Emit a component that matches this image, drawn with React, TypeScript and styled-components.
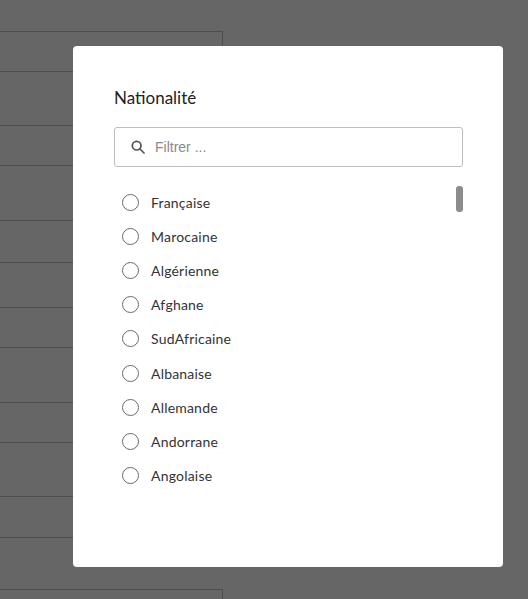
import React from "react";
import styled, { createGlobalStyle } from "styled-components";

const Global = createGlobalStyle`
  html, body { margin: 0; padding: 0; background: #666; font-family: Lato, "Noto Sans", sans-serif; }
  #root { width: 528px; height: 599px; overflow: hidden; position: relative; }
`;

const BgPage = styled.div`
  padding-top: 31px;
  width: 223px;
`;
const BgRow = styled.div<{ h: number }>`
  height: ${(p) => p.h}px;
  box-sizing: border-box;
  border-top: 1px solid #4e4e4e;
  border-right: ${(p) => (p.h === 40 ? "1px solid #4e4e4e" : "none")};
`;

const Modal = styled.div`
  position: absolute;
  left: 73px;
  top: 46px;
  width: 430px;
  height: 521px;
  background: #fff;
  border-radius: 4px;
  box-sizing: border-box;
  padding: 41px 41px 0 41px;
  display: flex;
  flex-direction: column;
`;
const Title = styled.h2`
  margin: 0;
  font-size: 17px;
  font-weight: 400;
  color: #222;
  line-height: 22px;
`;
const SearchBox = styled.div`
  margin-top: 18px;
  height: 40px;
  border: 1px solid #bdbdbd;
  border-radius: 3px;
  box-sizing: border-box;
  display: flex;
  align-items: center;
  padding-left: 15px;
  gap: 9px;
  width: 349px;
`;
const Placeholder = styled.span`
  font-size: 14px;
  color: #8a8a8a;
  font-family: "Liberation Sans", Arial, sans-serif;
`;
const ListWrap = styled.div`
  position: relative;
  margin-top: 18px;
  width: 349px;
`;
const Item = styled.div`
  height: 34.2px;
  display: flex;
  align-items: center;
  padding-left: 8px;
  gap: 12px;
`;
const Radio = styled.span`
  width: 17px;
  height: 17px;
  border: 1.6px solid #6a6a6a;
  border-radius: 50%;
  box-sizing: border-box;
`;
const Label = styled.span`
  font-size: 14px;
  color: #333;
  letter-spacing: 0.2px;
`;
const Thumb = styled.div`
  position: absolute;
  right: 0;
  top: 1px;
  width: 7px;
  height: 26px;
  border-radius: 3px;
  background: #8c8c8c;
`;

const rows = [40, 54, 40, 55, 42, 45, 40, 55, 40, 54, 41, 52, 40];
const items = ["Française", "Marocaine", "Algérienne", "Afghane", "SudAfricaine", "Albanaise", "Allemande", "Andorrane", "Angolaise"];

export default function App() {
  return (
    <>
      <Global />
      <BgPage>
        {rows.map((h, i) => (
          <BgRow key={i} h={h} />
        ))}
      </BgPage>
      <Modal>
        <Title>Nationalité</Title>
        <SearchBox>
          <svg width="16" height="16" viewBox="0 0 24 24" fill="none" stroke="#555" strokeWidth="2.6" strokeLinecap="round">
            <circle cx="10" cy="10" r="6.5" />
            <line x1="15" y1="15" x2="21" y2="21" />
          </svg>
          <Placeholder>Filtrer ...</Placeholder>
        </SearchBox>
        <ListWrap>
          {items.map((t) => (
            <Item key={t}>
              <Radio />
              <Label>{t}</Label>
            </Item>
          ))}
          <Thumb />
        </ListWrap>
      </Modal>
    </>
  );
}
